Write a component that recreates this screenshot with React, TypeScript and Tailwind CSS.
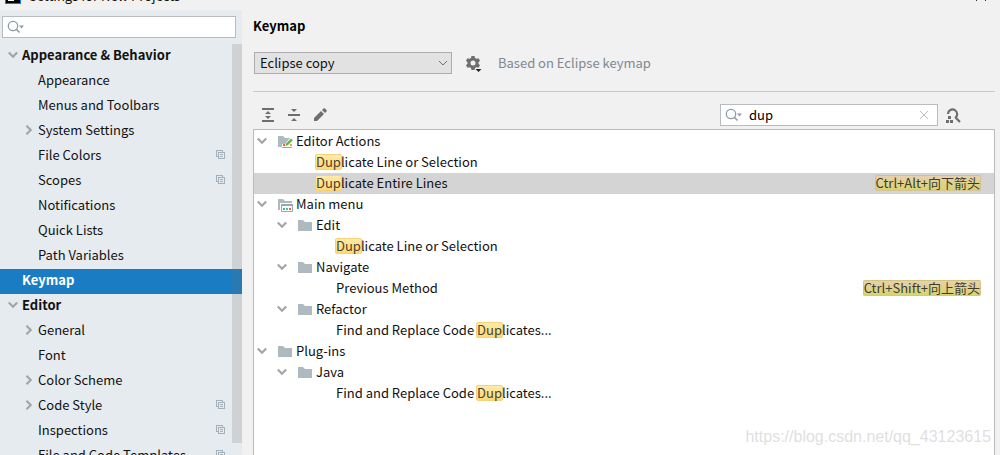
import React from "react";
import clsx from "clsx";

interface SettingsItem {
  label: string;
  level: 0 | 1;
  open?: boolean; // undefined = no children
  perProject?: boolean;
  selected?: boolean;
}

interface ActionItem {
  label: string;
  level: 0 | 1 | 2;
  icon?: "editor" | "menu" | "folder";
  shortcut?: string;
  selected?: boolean;
}

const settings: SettingsItem[] = [
  { label: "Appearance & Behavior", level: 0, open: true },
  { label: "Appearance", level: 1 },
  { label: "Menus and Toolbars", level: 1 },
  { label: "System Settings", level: 1, open: false },
  { label: "File Colors", level: 1, perProject: true },
  { label: "Scopes", level: 1, perProject: true },
  { label: "Notifications", level: 1 },
  { label: "Quick Lists", level: 1 },
  { label: "Path Variables", level: 1 },
  { label: "Keymap", level: 0, selected: true },
  { label: "Editor", level: 0, open: true },
  { label: "General", level: 1, open: false },
  { label: "Font", level: 1 },
  { label: "Color Scheme", level: 1, open: false },
  { label: "Code Style", level: 1, open: false, perProject: true },
  { label: "Inspections", level: 1, perProject: true },
  { label: "File and Code Templates", level: 1, perProject: true },
];

const actions: ActionItem[] = [
  { label: "Editor Actions", level: 0, icon: "editor" },
  { label: "Duplicate Line or Selection", level: 1 },
  { label: "Duplicate Entire Lines", level: 1, shortcut: "Ctrl+Alt+向下箭头", selected: true },
  { label: "Main menu", level: 0, icon: "menu" },
  { label: "Edit", level: 1, icon: "folder" },
  { label: "Duplicate Line or Selection", level: 2 },
  { label: "Navigate", level: 1, icon: "folder" },
  { label: "Previous Method", level: 2, shortcut: "Ctrl+Shift+向上箭头" },
  { label: "Refactor", level: 1, icon: "folder" },
  { label: "Find and Replace Code Duplicates...", level: 2 },
  { label: "Plug-ins", level: 0, icon: "folder" },
  { label: "Java", level: 1, icon: "folder" },
  { label: "Find and Replace Code Duplicates...", level: 2 },
];

function Chevron({ open }: { open: boolean }) {
  return (
    <svg width="10" height="10" viewBox="0 0 10 10" fill="none" stroke="#a3a5a7" strokeWidth="2.2">
      <path d={open ? "M.8 2.500L5 6.700l4.200-4.200" : "M2.500.8L6.700 5 2.500 9.200"} />
    </svg>
  );
}

function CopyIcon() {
  return (
    <svg width="10" height="10" viewBox="0 0 10 10" fill="none" stroke="#a3b0ba" shapeRendering="crispEdges">
      <path d="M2 6.500H.5v-6h6V2" />
      <path d="M2.500 2.500h6v6h-6z" />
      <path d="M4 4.500h3M4 6.500h3" />
    </svg>
  );
}

function SearchIcon() {
  return (
    <svg width="18" height="14" viewBox="0 0 18 14" fill="none">
      <circle cx="6" cy="6" r="4.700" stroke="#8f9ba5" strokeWidth="1.300" />
      <path d="M9.300 9.300L12.500 12.500" stroke="#8f9ba5" strokeWidth="1.600" />
      <path d="M12 5.500h5l-2.500 3z" fill="#8f9ba5" />
    </svg>
  );
}

function FolderIcon({ kind }: { kind: "editor" | "menu" | "folder" }) {
  return (
    <svg width="16" height="16" viewBox="0 0 16 16">
      <path d="M1 3h5l2 2h7v9H1z" fill="#aeb9c0" />
      {kind === "editor" && (
        <>
          <path d="M5 16v-5h3l5-6h3v11z" fill="#fff" />
          <path d="M8.500 13l.5-2.500L14 5.500l1.800 1.800-5 5z" fill="#62b543" />
          <path d="M6 11h2v2H6z" fill="#f26522" />
          <path d="M13 11h2v2h-2z" fill="#f4a63a" />
          <path d="M5 14.500h10" stroke="#9aa7b0" />
        </>
      )}
      {kind === "menu" && (
        <>
          <path d="M3 7h13v9H3z" fill="#fff" />
          <path d="M4.500 8.500h11v7h-11z" fill="#fff" stroke="#9aa7b0" />
          <path d="M4 8h12v2H4z" fill="#9aa7b0" />
          <path d="M6 12h2v2H6z" fill="#62b543" />
          <path d="M9 12h2v2H9z" fill="#40b6e0" />
          <path d="M12 12h2v2h-2z" fill="#f26522" />
        </>
      )}
    </svg>
  );
}

// marks the part of an action name that the search matched
function Highlighted({ text }: { text: string }) {
  const at = text.indexOf("Dup");
  if (at < 0) return <span className="whitespace-pre">{text}</span>;
  return (
    <span className="whitespace-pre">
      {text.slice(0, at)}
      <mark className="-mx-px inline-block rounded-xs border border-[#f2d27c] bg-linear-to-b from-[#ffeaa8] to-[#ffd970] leading-[14px] text-[#4a4330]">
        Dup
      </mark>
      {text.slice(at + 3)}
    </span>
  );
}

function Sidebar() {
  return (
    <aside className="flex w-[242px] shrink-0 flex-col bg-[#e6ebef] pt-1.5">
      <label className="mr-1.5 ml-0.5 flex h-[22px] shrink-0 items-center border border-[#b9bcbe] bg-white pl-1">
        <SearchIcon />
        <input aria-label="Search settings" className="min-w-0 flex-1 px-1 outline-none" />
      </label>
      <nav className="relative mt-1.5 min-h-0 flex-1 overflow-hidden">
        {settings.map((item) => (
          <button
            key={item.label}
            type="button"
            className={clsx(
              "flex h-[25px] w-full items-center pb-[3px] text-left whitespace-nowrap",
              item.level === 0 ? "pl-2 font-bold" : "pl-6",
              item.selected && "bg-[#1a7dc4] text-white"
            )}
          >
            <span className="w-3.5 shrink-0">{item.open !== undefined && <Chevron open={item.open} />}</span>
            <span className="flex-1">{item.label}</span>
            <span className="w-[26px] shrink-0">{item.perProject && <CopyIcon />}</span>
          </button>
        ))}
        <div className="absolute top-0 right-0 bottom-3 w-2.5 bg-[#6e6e6e]/20" />
      </nav>
    </aside>
  );
}

function Toolbar() {
  return (
    <div className="flex h-[37px] items-center pt-2 text-[#6e6e6e]">
      <button type="button" aria-label="Expand all" className="ml-1.5 size-[18px]">
        <svg width="18" height="18" viewBox="0 0 18 18" fill="currentColor">
          <path d="M3 2h12v2H3zM3 14h12v2H3zM9 5l3 3H6zM9 13l3-3H6z" />
        </svg>
      </button>
      <button type="button" aria-label="Collapse all" className="ml-2 size-[18px]">
        <svg width="18" height="18" viewBox="0 0 18 18" fill="currentColor">
          <path d="M3 8h12v2H3zM6 3h6L9 6zM6 15h6l-3-3z" />
        </svg>
      </button>
      <button type="button" aria-label="Edit shortcut" className="ml-2 size-[18px]">
        <svg width="18" height="18" viewBox="0 0 18 18" fill="currentColor">
          <path d="M3 12l7-7 3 3-7 7H3zM11 4l1.500-1.500q.8-.6 1.500 0l1.500 1.500q.6.8 0 1.500L14 7z" />
        </svg>
      </button>
      <label className="ml-auto flex h-[22px] w-[218px] items-center border border-[#b9bcbe] bg-white pl-1">
        <SearchIcon />
        <input aria-label="Search actions" defaultValue="dup" className="min-w-0 flex-1 px-1.5 text-black outline-none" />
        <button type="button" aria-label="Clear" className="mr-2">
          <svg width="10" height="10" viewBox="0 0 10 10" fill="none" stroke="#b9bec2">
            <path d="M1 1l8 8M9 1L1 9" />
          </svg>
        </button>
      </label>
      <button type="button" aria-label="Find by shortcut" className="mr-[33px] ml-1.5 size-[18px]">
        <svg width="18" height="18" viewBox="0 0 18 18" fill="none">
          <path d="M4 8a4.600 4.600 0 1 1 7 4M11.500 11.500L16 16" stroke="currentColor" strokeWidth="2.200" />
          <path d="M4 10h3v3H4zM2 14h3v3H2zM6 14h3v3H6z" fill="currentColor" />
        </svg>
      </button>
    </div>
  );
}

function ActionTree() {
  return (
    <div className="min-h-0 flex-1 overflow-hidden border border-b-0 border-[#b9bcbe] bg-white pt-px">
      {actions.map((item, i) => (
        <div
          key={i}
          className={clsx("flex h-[21px] items-center pr-[13px] pb-0.5", item.selected && "bg-[#d4d4d4]")}
        >
          <div
            className={clsx(
              "flex flex-1 items-center",
              item.level === 0 && "pl-[3px]",
              item.level === 1 && "pl-[23px]",
              item.level === 2 && "pl-[43px]"
            )}
          >
            {item.icon ? (
              <>
                <button type="button" aria-label={`Collapse ${item.label}`} className="mr-2.5">
                  <Chevron open />
                </button>
                <FolderIcon kind={item.icon} />
                <span className="ml-[3px]">{item.label}</span>
              </>
            ) : (
              <span className="ml-[39px]">
                <Highlighted text={item.label} />
              </span>
            )}
          </div>
          {item.shortcut && (
            <kbd className="rounded-xs border border-[#c9b98a]/60 bg-linear-to-b from-[#e9cfae] to-[#d8d468] font-[inherit] leading-[14px] text-[#3c3c32]">
              {item.shortcut}
            </kbd>
          )}
        </div>
      ))}
    </div>
  );
}

export default function App() {
  return (
    <div className="relative flex h-screen flex-col overflow-hidden bg-[#f1f1f1] font-['Noto_Sans_CJK_SC',sans-serif] text-[13px] leading-4 text-[#111]">
      <header className="flex h-2.5 shrink-0 items-end overflow-hidden pb-1.5 pl-[5px]">
        <svg width="16" height="16" viewBox="0 0 16 16" className="shrink-0">
          <path d="M0 0h16v16H0z" fill="#087cfa" />
          <path d="M1 1h14v14H1z" fill="#000" />
          <path d="M3 11h6v2H3z" fill="#fff" />
        </svg>
        <span className="ml-2 shrink-0">Settings for New Projects</span>
        <svg width="10" height="10" viewBox="0 0 10 10" className="mr-3.5 mb-[3px] ml-auto shrink-0" stroke="#333">
          <path d="M0 0l10 10M10 0L0 10" />
        </svg>
      </header>
      <div className="flex min-h-0 flex-1">
        <Sidebar />
        <main className="flex min-w-0 flex-1 flex-col pr-[5px] pl-[11px]">
          <h1 className="pt-2 font-bold text-black">Keymap</h1>
          <div className="mt-[18px] ml-px flex h-[22px] shrink-0 items-center">
            <div className="relative">
              <select
                aria-label="Keymap"
                className="h-[22px] w-[198px] appearance-none border border-[#adadad] bg-[#e2e2e2] pl-[5px] outline-none"
              >
                <option>Eclipse copy</option>
              </select>
              <svg
                width="10"
                height="6"
                viewBox="0 0 10 6"
                fill="none"
                stroke="#6e6e6e"
                className="pointer-events-none absolute top-2 right-1"
              >
                <path d="M1 1l4 4 4-4" />
              </svg>
            </div>
            <button type="button" aria-label="Keymap actions" className="ml-[13px]">
              <svg width="17" height="17" viewBox="0 0 17 17">
                <path
                  d="M6.500 1h3l.5 2 1.500.8 2-.6 1.500 2.600-1.500 1.400v1.600l1.500 1.400-1.500 2.600-2-.6L10 13l-.5 2h-3L6 13l-1.500-.8-2 .6L1 10.200l1.500-1.400V7.200L1 5.800l1.500-2.600 2 .6L6 3zM8 5.500a2.500 2.500 0 1 0 0 5 2.500 2.500 0 0 0 0-5z"
                  fill="#6e6e6e"
                  fillRule="evenodd"
                />
                <path d="M10.500 14h6l-3 3z" fill="#222" />
              </svg>
            </button>
            <span className="ml-4 text-[#808890]">Based on Eclipse keymap</span>
          </div>
          <hr className="mt-[17px] border-[#c9c9c9]" />
          <Toolbar />
          <ActionTree />
        </main>
      </div>
      <div className="pointer-events-none absolute right-[9px] bottom-2 font-['Liberation_Sans',sans-serif] text-base leading-5 text-[#dfdfdf]">
        https://blog.csdn.net/qq_43123615
      </div>
    </div>
  );
}
